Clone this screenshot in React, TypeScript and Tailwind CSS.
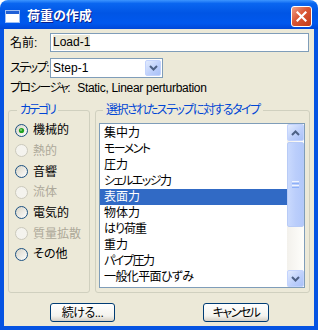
const font = "font-['Liberation_Sans','Noto_Sans_CJK_JP',sans-serif] [font-feature-settings:'palt'] text-[12px] text-black";

const categories = [
  { label: "機械的", checked: true },
  { label: "熱的", disabled: true },
  { label: "音響" },
  { label: "流体", disabled: true },
  { label: "電気的" },
  { label: "質量拡散", disabled: true },
  { label: "その他" },
];

// kana in the original bitmap font are narrow, so they get tighter tracking
const types = [
  { t: "集中力", k: "" },
  { t: "モーメント", k: "tracking-[-1.5px]" },
  { t: "圧力", k: "" },
  { t: "シェルエッジ力", k: "tracking-[-1.5px]" },
  { t: "表面力", k: "" },
  { t: "物体力", k: "" },
  { t: "はり荷重", k: "tracking-[-1px]" },
  { t: "重力", k: "" },
  { t: "パイプ圧力", k: "tracking-[-1.5px]" },
  { t: "一般化平面ひずみ", k: "tracking-[-0.6px]" },
];

function Radio({ label, checked, disabled }: { label: string; checked?: boolean; disabled?: boolean }) {
  return (
    <div className="flex items-center h-[20.67px]">
      <svg width="13" height="13" viewBox="0 0 13 13" className="shrink-0">
        <defs>
          <linearGradient id="rfill" x1="0" y1="0" x2="1" y2="1">
            <stop offset="0" stopColor="#D6D3C6" />
            <stop offset="1" stopColor="#FFFFFF" />
          </linearGradient>
        </defs>
        {disabled ? (
          <circle cx="6.5" cy="6.5" r="6" fill="#F4F3EE" stroke="#CAC8BB" />
        ) : (
          <circle cx="6.5" cy="6.5" r="6" fill="url(#rfill)" stroke="#1C5180" />
        )}
        {checked && (
          <>
            <circle cx="6.5" cy="6.5" r="2.6" fill="#21A121" />
            <circle cx="6" cy="6" r="1" fill="#7BD47B" />
          </>
        )}
      </svg>
      <span className={"ml-[5px] leading-[14px] whitespace-nowrap " + (disabled ? "text-[#ACA899]" : "text-black")}>{label}</span>
    </div>
  );
}

function ScrollButton({ up }: { up?: boolean }) {
  return (
    <div className="h-[17px] w-[17px] rounded-[2px] border border-[#C3D3FD] bg-[linear-gradient(to_bottom_right,#E2EBFE,#BBCEFB_60%,#A9C1F8)] flex items-center justify-center">
      <svg width="9" height="6" viewBox="0 0 9 6">
        <polyline
          points={up ? "1,5 4.5,1.5 8,5" : "1,1 4.5,4.5 8,1"}
          fill="none"
          stroke="#4D6185"
          strokeWidth="2"
        />
      </svg>
    </div>
  );
}

export default function App() {
  return (
    <div className={"w-[318px] h-[330px] flex flex-col bg-white " + font}>
      {/* title bar */}
      <div className="h-[29px] shrink-0 rounded-t-[8px] bg-[linear-gradient(to_bottom,#3D95FF_0%,#0A66F0_12%,#0055E5_45%,#0058EE_80%,#0047D8_100%)] flex items-center pt-[3px] pl-[5px] pr-[6px]">
        <svg width="16" height="16" viewBox="0 0 16 16" className="shrink-0">
          <rect x="0.5" y="2.5" width="14" height="12" fill="#FFFFFF" stroke="#9DBEF5" />
          <rect x="1" y="3" width="13" height="3" fill="#1F5FD6" />
        </svg>
        <span className="ml-[6px] text-white font-bold text-[13px] leading-[16px] [text-shadow:1px_1px_0_#0A1E8C]">荷重の作成</span>
        <div className="ml-auto w-[21px] h-[21px] rounded-[3px] border border-white bg-[linear-gradient(to_bottom_right,#F0A088,#DA5634_45%,#C23B18)] flex items-center justify-center">
          <svg width="11" height="11" viewBox="0 0 11 11">
            <path d="M1.5 1.5 L9.5 9.5 M9.5 1.5 L1.5 9.5" stroke="#FFFFFF" strokeWidth="2.2" strokeLinecap="square" />
          </svg>
        </div>
      </div>

      {/* body */}
      <div className="flex-1 flex flex-col bg-[#ECE9D8] border-x-[4px] border-b-[4px] border-[#0553E2]">
        <div className="mt-[4px] flex items-center h-[19px]">
          <span className="w-[46px] pl-[6px] shrink-0 whitespace-nowrap">名前:</span>
          <div className="flex-1 mr-[5px] h-full border border-[#7F9DB9] bg-white flex items-center pl-[2px]">
            <span className="bg-[#ECE9D8] leading-[15px]">Load-1</span>
          </div>
        </div>

        <div className="mt-[6px] flex items-center h-[20px]">
          <span className="w-[46px] pl-[6px] shrink-0 whitespace-nowrap tracking-[-1.5px]">ステップ:</span>
          <div className="w-[113px] h-full border border-[#7F9DB9] bg-white flex items-center">
            <span className="flex-1 pl-[2px]">Step-1</span>
            <div className="w-[16px] h-[16px] mr-[1px] rounded-[2px] border border-[#C3D3FD] bg-[linear-gradient(to_bottom_right,#E2EBFE,#BBCEFB_60%,#A9C1F8)] flex items-center justify-center">
              <svg width="9" height="6" viewBox="0 0 9 6">
                <polyline points="1,1 4.5,4.5 8,1" fill="none" stroke="#4D6185" strokeWidth="2" />
              </svg>
            </div>
          </div>
        </div>

        <div className="mt-[3px] h-[14px] leading-[14px] pl-[6px] flex whitespace-nowrap">
          <span className="tracking-[-1.5px]">プロシージャ:</span>
          <span className="ml-[8px] tracking-[-0.3px]">Static, Linear perturbation</span>
        </div>

        <div className="mt-[8px] mx-[4px] h-[190px] flex gap-[5px]">
          <fieldset className="w-[82px] h-full border border-[#D0D0BF] rounded-[3px] flex flex-col">
            <legend className="ml-[8px] px-[3px] leading-[14px] text-[#0046D5] tracking-[-2px]">カテゴリ</legend>
            <div className="pt-[3px] pl-[6px] flex flex-col">
              {categories.map((c) => (
                <Radio key={c.label} label={c.label} checked={c.checked} disabled={c.disabled} />
              ))}
            </div>
          </fieldset>

          <fieldset className="flex-1 h-full border border-[#D0D0BF] rounded-[3px] flex flex-col">
            <legend className="ml-[7px] px-[3px] leading-[14px] text-[#0046D5] whitespace-nowrap tracking-[-1.5px]">選択されたステップに対するタイプ</legend>
            <div className="flex-1 flex pt-[6px] pb-[4px] pl-[3px] pr-[4px]">
              <div className="flex-1 flex border border-[#7F9DB9] bg-white">
                <div className="flex-1 pt-[1px] flex flex-col">
                  {types.map(({ t, k }) => (
                    <div
                      key={t}
                      className={
                        "h-[16px] pl-[4px] flex items-center leading-[14px] whitespace-nowrap " +
                        k +
                        " " +
                        (t === "表面力" ? "bg-[#316AC5] text-white" : "")
                      }
                    >
                      {t}
                    </div>
                  ))}
                </div>
                <div className="w-[17px] flex flex-col bg-[linear-gradient(to_right,#F3F1EC,#FEFEFB)]">
                  <ScrollButton up />
                  <div className="mt-[1px] h-[85px] rounded-[2px] border border-[#B8CBF6] bg-[linear-gradient(to_right,#C9D9FD,#BBCEFB_50%,#B2C8FA)] flex flex-col items-center justify-center gap-[1px]">
                    <div className="w-[7px] h-[1px] bg-[#EEF4FE]" />
                    <div className="w-[7px] h-[1px] bg-[#8CB0F8]" />
                    <div className="w-[7px] h-[1px] bg-[#EEF4FE]" />
                    <div className="w-[7px] h-[1px] bg-[#8CB0F8]" />
                  </div>
                  <div className="flex-1" />
                  <ScrollButton />
                </div>
              </div>
            </div>
          </fieldset>
        </div>

        <div className="mt-[10px] flex ml-[46px]">
          <button className="w-[65px] h-[19px] rounded-[3px] border border-[#003C74] bg-[linear-gradient(to_bottom,#FFFFFF,#F4F3EE_70%,#D6D0C5)] leading-[14px] tracking-[-0.5px]">
            続ける...
          </button>
          <button className="ml-[88px] w-[66px] h-[19px] rounded-[3px] border border-[#003C74] bg-[linear-gradient(to_bottom,#FFFFFF,#F4F3EE_70%,#D6D0C5)] leading-[14px] tracking-[-1.5px]">
            キャンセル
          </button>
        </div>
      </div>
    </div>
  );
}
